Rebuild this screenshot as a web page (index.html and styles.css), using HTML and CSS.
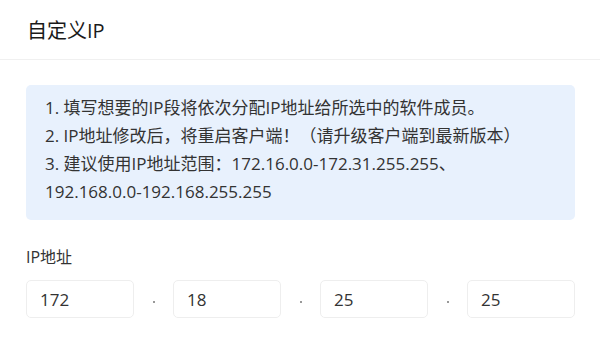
FILE: index.html
```html
<!DOCTYPE html>
<html lang="zh-CN">
<head>
<meta charset="utf-8">
<title>自定义IP</title>
<link rel="stylesheet" href="styles.css">
</head>
<body>
<div class="dialog">
  <header class="dialog-header">
    <h1 class="dialog-title">自定义IP</h1>
  </header>
  <main class="dialog-body">
    <div class="notice">
      <p>1. 填写想要的IP段将依次分配IP地址给所选中的软件成员。</p>
      <p>2. IP地址修改后，将重启客户端！（请升级客户端到最新版本）</p>
      <p>3. 建议使用IP地址范围：<span class="nowrap">172.16.0.0-172.31.255.255、</span><span class="nowrap">192.168.0.0-192.168.255.255</span></p>
    </div>
    <div class="field">
      <label class="field-label">IP地址</label>
      <div class="ip-row">
        <div class="ip-input">172</div>
        <span class="ip-sep"><i class="dot"></i></span>
        <div class="ip-input">18</div>
        <span class="ip-sep"><i class="dot"></i></span>
        <div class="ip-input">25</div>
        <span class="ip-sep"><i class="dot"></i></span>
        <div class="ip-input">25</div>
      </div>
    </div>
  </main>
</div>
</body>
</html>
```
FILE: styles.css
```css
* { box-sizing: border-box; }
html, body {
  margin: 0;
  padding: 0;
  background: #ffffff;
}
body {
  font-family: "Open Sans", "Noto Sans CJK SC", sans-serif;
  font-weight: 400;
  color: #333333;
}
.dialog {
  width: 600px;
}
.dialog-header {
  height: 60px;
  display: flex;
  align-items: center;
  padding: 3px 27px 0;
  border-bottom: 1px solid #f0f0f0;
}
.dialog-title {
  margin: 0;
  font-size: 20px;
  font-weight: 400;
  color: #1a1a1a;
  line-height: 26px;
}
.dialog-body {
  padding: 25px 25px 0 26px;
}
.notice {
  background: #e8f1fd;
  border-radius: 5px;
  padding: 9px 19px 14px;
  font-size: 17px;
  line-height: 28px;
  color: #333333;
}
.notice p {
  margin: 0;
}
.nowrap {
  white-space: nowrap;
}
.field {
  margin-top: 25px;
}
.field-label {
  display: block;
  font-size: 16px;
  line-height: 24px;
  color: #333333;
}
.ip-row {
  margin-top: 11px;
  display: grid;
  grid-template-columns: 1fr 39px 1fr 39px 1fr 39px 1fr;
}
.ip-input {
  height: 38px;
  border: 1px solid #eeeeee;
  border-radius: 5px;
  padding: 0 13px;
  display: flex;
  align-items: center;
  font-size: 17px;
  color: #333333;
}
.ip-sep {
  display: flex;
  justify-content: center;
  align-items: center;
  padding-top: 6px;
}
.dot {
  width: 2px;
  height: 2px;
  border-radius: 50%;
  background: #777777;
}
```
